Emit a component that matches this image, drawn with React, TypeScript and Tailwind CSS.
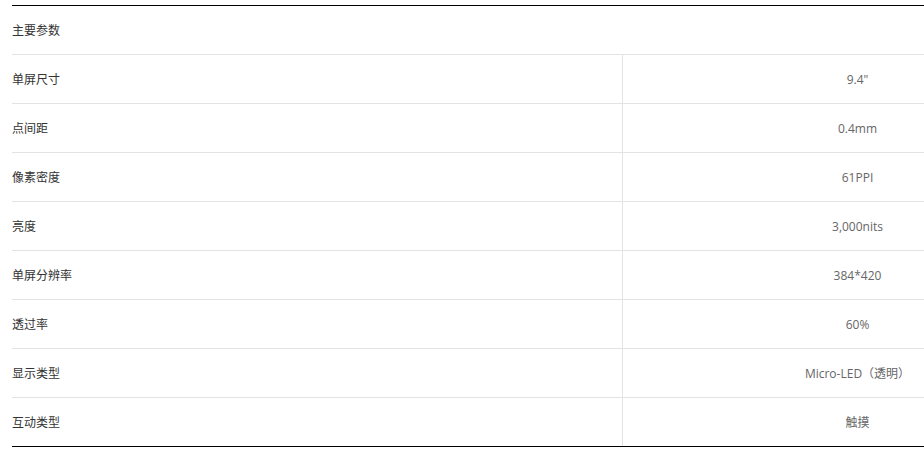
const SPECS: [string, string][] = [
  ["单屏尺寸", "9.4\""],
  ["点间距", "0.4mm"],
  ["像素密度", "61PPI"],
  ["亮度", "3,000nits"],
  ["单屏分辨率", "384*420"],
  ["透过率", "60%"],
  ["显示类型", "Micro-LED（透明）"],
  ["互动类型", "触摸"],
];

export default function App() {
  return (
    <div className="h-[456px] w-[924px] overflow-hidden bg-white pl-3 pt-[5px] font-['Open_Sans','Noto_Sans_CJK_SC',sans-serif] text-[12px]">
      <div className="w-[1080px] border-t border-b border-black">
        {/* Header row spans both columns */}
        <div className="flex h-[49px] items-center border-b border-[#e3e3e3] pt-[2px] text-[#333]">
          主要参数
        </div>
        {SPECS.map(([label, value], i) => (
          <div
            key={label}
            className={
              i === SPECS.length - 1
                ? "flex h-[48px]"
                : "flex h-[49px] border-b border-[#e3e3e3]"
            }
          >
            <div className="flex w-[611px] items-center border-r border-[#e3e3e3] pt-[2px] text-[#333]">
              {label}
            </div>
            <div className="flex flex-1 items-center justify-center pt-[2px] text-[#666]">
              {value}
            </div>
          </div>
        ))}
      </div>
    </div>
  );
}
